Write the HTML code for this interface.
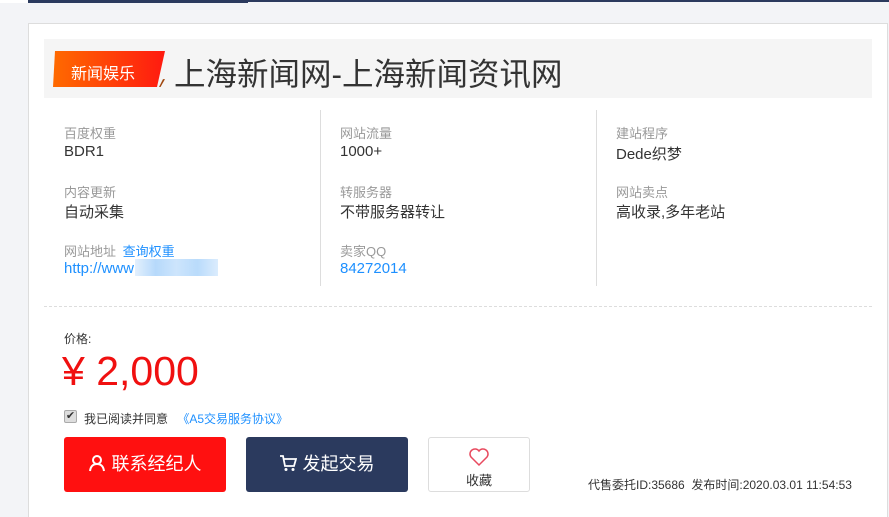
<!DOCTYPE html>
<html style="width:889px;height:517px;overflow:hidden"><head><meta charset="utf-8"><style>
*{margin:0;padding:0;box-sizing:border-box}
body{width:889px;height:517px;background:#f3f4f7;font-family:"Liberation Sans","Noto Sans CJK SC",sans-serif;position:relative;overflow:hidden;color:#333}
.abs{position:absolute}
.lbl{font-size:13px;color:#999}
.val{font-size:15px;color:#333}
.blue{color:#1e90ff}
</style></head><body>
<div class="abs" style="left:0;top:0;width:889px;height:2px;background:#2b3a5e"></div>
<div class="abs" style="left:28px;top:0;width:220px;height:3px;background:#2b3a5e"></div>
<div class="abs" style="left:0;top:0;width:28px;height:3px;background:#fff"></div>
<div class="abs" style="left:28px;top:23px;width:860px;height:494px;background:#fff;border:1px solid #ddd;border-bottom:none"></div>
<div class="abs" style="left:44px;top:39px;width:828px;height:59px;background:#f5f5f5"></div>
<div class="abs" style="left:53px;top:51px;width:112px;height:36px;background:#a0470f;clip-path:polygon(100% 78%,110px 78%,106px 100%,96% 100%)"></div>
<div class="abs" style="left:53px;top:51px;width:112px;height:36px;background:linear-gradient(90deg,#ff6a00,#ff1a10);clip-path:polygon(2px 0,100% 0,104px 100%,0 100%)"></div>
<div class="abs" style="left:71px;top:60px;color:#fff;font-size:16px">新闻娱乐</div>
<div class="abs" style="left:174px;top:49px;font-size:31.5px;color:#333">上海新闻网-上海新闻资讯网</div>

<div class="abs" style="left:320px;top:110px;width:1px;height:176px;background:#ddd"></div>
<div class="abs" style="left:596px;top:110px;width:1px;height:176px;background:#ddd"></div>

<div class="abs lbl" style="left:64px;top:123px">百度权重</div>
<div class="abs val" style="left:64px;top:143px">BDR1</div>
<div class="abs lbl" style="left:64px;top:182px">内容更新</div>
<div class="abs val" style="left:64px;top:201px">自动采集</div>
<div class="abs lbl" style="left:64px;top:241px">网站地址 <span style="color:#1e90ff;margin-left:3px">查询权重</span></div>
<div class="abs val blue" style="left:64px;top:260px">http://www</div>
<div class="abs" style="left:135px;top:259px;width:83px;height:17px;background:linear-gradient(90deg,#e3f0fd,#b6d9fb,#cde5fc,#b9dbfb,#dbecfd)"></div>

<div class="abs lbl" style="left:340px;top:123px">网站流量</div>
<div class="abs val" style="left:340px;top:143px">1000+</div>
<div class="abs lbl" style="left:340px;top:182px">转服务器</div>
<div class="abs val" style="left:340px;top:201px">不带服务器转让</div>
<div class="abs lbl" style="left:340px;top:241px">卖家QQ</div>
<div class="abs val blue" style="left:340px;top:260px">84272014</div>

<div class="abs lbl" style="left:616px;top:123px">建站程序</div>
<div class="abs val" style="left:616px;top:143px">Dede织梦</div>
<div class="abs lbl" style="left:616px;top:182px">网站卖点</div>
<div class="abs val" style="left:616px;top:201px">高收录,多年老站</div>

<div class="abs" style="left:44px;top:306px;width:828px;border-top:1px dashed #ddd"></div>
<div class="abs" style="left:64px;top:330px;font-size:12px;color:#333">价格:</div>
<div class="abs" style="left:62px;top:348px;font-size:41px;color:#f01010">¥ 2,000</div>

<div class="abs" style="left:64px;top:410px;width:13px;height:13px;background:#ddd;border:1px solid #aaa;border-radius:2px;font-size:11px;line-height:11px;text-align:center;color:#333">✔</div>
<div class="abs" style="left:84px;top:410px;font-size:12px;color:#333">我已阅读并同意 <span style="color:#1e90ff;margin-left:6px">《A5交易服务协议》</span></div>

<div class="abs" style="left:64px;top:437px;width:162px;height:55px;background:#ff1010;border-radius:3px;color:#fff;font-size:18px;text-align:center;line-height:55px">
<svg width="18" height="18" viewBox="0 0 18 18" style="vertical-align:-2px"><circle cx="9" cy="6" r="4" fill="none" stroke="#fff" stroke-width="2"/><path d="M2 17 Q3 10 9 10 Q15 10 16 17" fill="none" stroke="#fff" stroke-width="2"/></svg> 联系经纪人</div>
<div class="abs" style="left:246px;top:437px;width:162px;height:55px;background:#2b3a5e;border-radius:3px;color:#fff;font-size:18px;text-align:center;line-height:55px">
<svg width="18" height="18" viewBox="0 0 18 18" style="vertical-align:-2px"><path d="M1 2h3l2 10h9l2-7H5" fill="none" stroke="#fff" stroke-width="1.8"/><circle cx="7" cy="15.5" r="1.5" fill="#fff"/><circle cx="14" cy="15.5" r="1.5" fill="#fff"/></svg> 发起交易</div>
<div class="abs" style="left:428px;top:437px;width:102px;height:55px;border:1px solid #ddd;border-radius:3px;text-align:center">
<svg width="22" height="20" viewBox="0 0 22 20" style="margin-top:9px"><path d="M11 18 L3 10 A4.5 4.5 0 0 1 11 4 A4.5 4.5 0 0 1 19 10 Z" fill="none" stroke="#e84a5f" stroke-width="1.5"/></svg>
<div style="font-size:13px;color:#333;margin-top:-2px">收藏</div></div>
<div class="abs" style="left:588px;top:476px;font-size:12px;color:#333">代售委托ID:35686 &nbsp;发布时间:2020.03.01 11:54:53</div>
</body></html>
